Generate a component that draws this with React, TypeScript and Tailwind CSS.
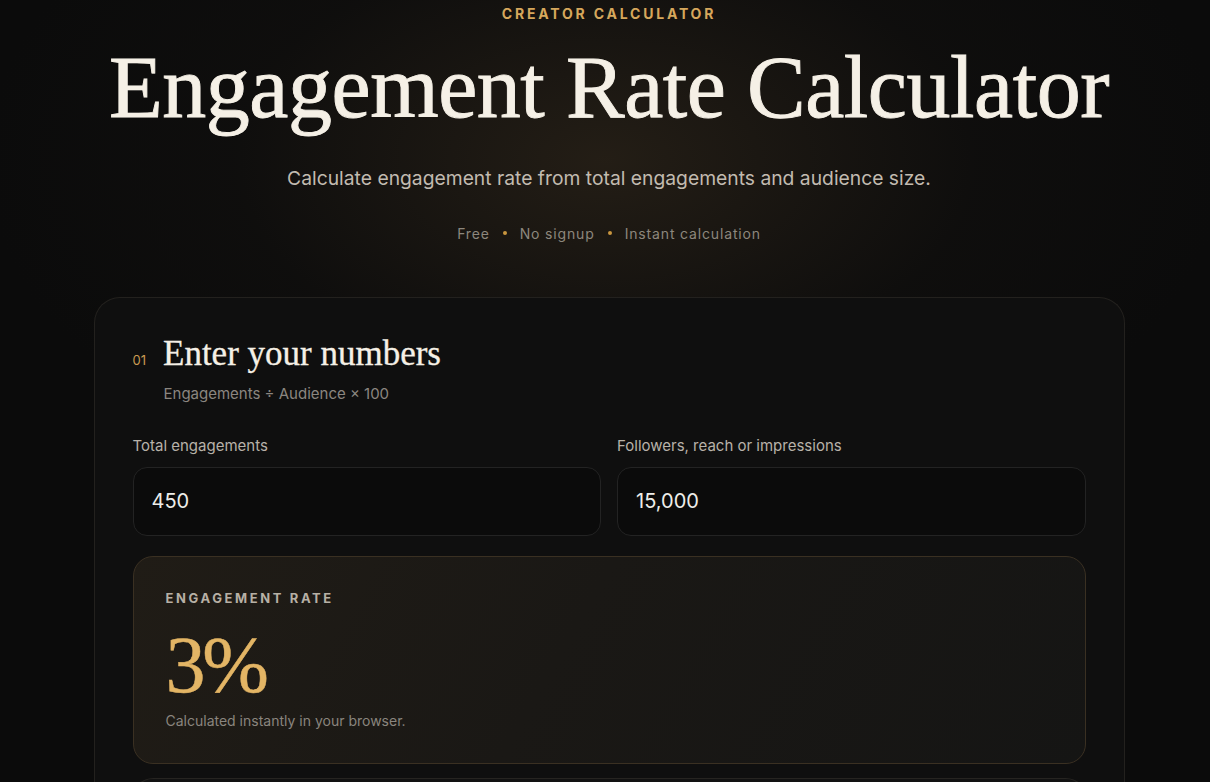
export default function App() {
  const serif = { fontFamily: '"Liberation Serif", "DejaVu Serif", serif' };
  return (
    <div
      className="min-h-[782px] w-full overflow-hidden bg-[#0b0b0b] pl-[8px] text-[#f3efe7]"
      style={{
        fontFamily: 'Inter, "Noto Sans", sans-serif',
        backgroundImage:
          "radial-gradient(ellipse 620px 360px at 50% 160px, rgba(60,48,32,0.5), rgba(20,18,16,0.4) 60%, rgba(11,11,11,0) 100%)",
      }}
    >
      <header className="flex flex-col items-center pt-[3px]">
        <p className="text-[14px] font-bold uppercase tracking-[0.2em] text-[#d6a75c]">Creator Calculator</p>
        <h1
          className="mt-[16px] text-[88px] leading-[96px] tracking-[-0.005em] text-[#f5f0e6] [-webkit-text-stroke:0.9px_#f5f0e6]"
          style={serif}
        >
          Engagement Rate Calculator
        </h1>
        <p className="mt-[28px] text-[19.3px] text-[#c2bbb0]">
          Calculate engagement rate from total engagements and audience size.
        </p>
        <div className="mt-[30px] flex items-center gap-[13px] text-[14px] tracking-[0.06em] text-[#8d877d]">
          <span>Free</span>
          <span className="h-[4px] w-[4px] rounded-full bg-[#c9963f]" />
          <span>No signup</span>
          <span className="h-[4px] w-[4px] rounded-full bg-[#c9963f]" />
          <span>Instant calculation</span>
        </div>
      </header>

      <main className="mx-auto mt-[53px] w-[1031px]">
        <section className="rounded-t-[26px] border border-b-0 border-[#23211e] bg-[#0f0f0f] px-[38px] pt-[38px] pb-[20px]">
          <div className="flex items-baseline gap-[17px]">
            <span className="text-[13px] text-[#c99b52]">01</span>
            <h2
              className="text-[35px] leading-[36px] text-[#f5f0e6] [-webkit-text-stroke:0.3px_#f5f0e6]"
              style={serif}
            >
              Enter your numbers
            </h2>
          </div>
          <p className="mt-[11px] pl-[31px] text-[15px] text-[#8b8680]">Engagements ÷ Audience × 100</p>

          <div className="mt-[30px] grid grid-cols-2 gap-[16px]">
            <label className="flex flex-col gap-[9px]">
              <span className="text-[15px] text-[#b8b2a9]">Total engagements</span>
              <div className="flex h-[69px] items-center rounded-[14px] border border-[#232323] bg-[#0b0b0b] px-[18px] text-[20px] text-[#eeeeea]">
                450
              </div>
            </label>
            <label className="flex flex-col gap-[9px]">
              <span className="text-[15px] text-[#b8b2a9]">Followers, reach or impressions</span>
              <div className="flex h-[69px] items-center rounded-[14px] border border-[#232323] bg-[#0b0b0b] px-[18px] text-[20px] text-[#eeeeea]">
                15,000
              </div>
            </label>
          </div>

          <div
            className="mt-[20px] h-[208px] rounded-[20px] border border-[#3a3022] px-[32px] pt-[32px]"
            style={{ backgroundImage: "linear-gradient(120deg, #201c16 0%, #1a1815 45%, #151514 100%)" }}
          >
            <p className="text-[13px] font-bold uppercase tracking-[0.2em] text-[#b7b0a5]">Engagement rate</p>
            <p
              className="mt-[18px] text-[80px] leading-[78px] tracking-[-0.04em] text-[#e3b565] [-webkit-text-stroke:0.5px_#e3b565]"
              style={serif}
            >
              3%
            </p>
            <p className="mt-[6px] text-[14px] text-[#8a857e]">Calculated instantly in your browser.</p>
          </div>

          <div className="mt-[14px] h-[20px] rounded-t-[20px] border border-b-0 border-[#262421] bg-[#121212]" />
        </section>
      </main>
    </div>
  );
}
